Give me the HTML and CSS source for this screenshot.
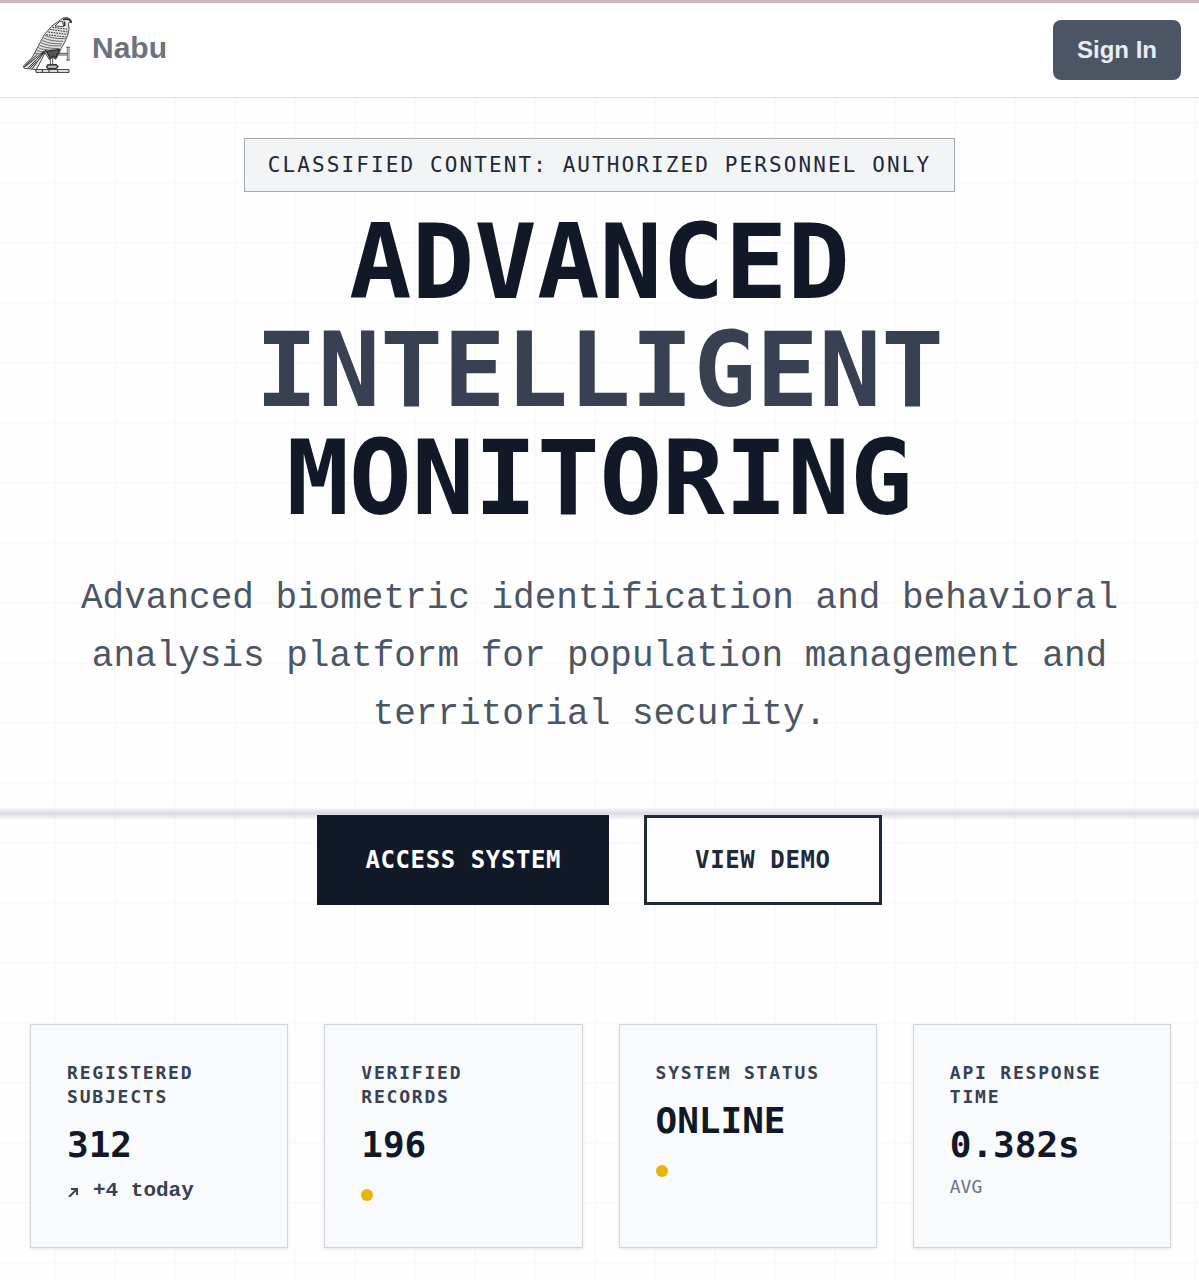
FILE: index.html
```html
<!DOCTYPE html>
<html lang="en">
<head>
<meta charset="utf-8">
<meta name="viewport" content="width=device-width, initial-scale=1">
<title>Nabu</title>
<link rel="stylesheet" href="styles.css">
</head>
<body>
<header class="header">
  <a class="brand" href="#">
    <svg class="brand-logo" viewBox="66 48 154 174" fill="none" stroke="#2b2b2b" stroke-width="2.5" stroke-linejoin="round" aria-hidden="true">
      <path fill="#e4e4e4" d="M180 60Q188 50 202 53Q214 56 214 68Q207 65 204 70Q210 88 202 106Q194 128 182 146L176 160L166 178L158 172L146 178L134 158L120 186L108 209L72 205L69 198L96 172Q116 134 132 104Q150 76 180 60Z"/>
      <path fill="#fff" d="M177 65L164 78L190 80L186 64Z"/>
      <path stroke-width="5" d="M188 58L204 57L213 66M192 65L193 78"/>
      <path stroke-width="3" stroke-dasharray="5 3" d="M156 82L203 88M149 88L204 96M144 96L202 103M138 104L198 111"/>
      <path stroke-width="2" d="M134 106Q150 116 194 116M130 114Q150 124 189 124M126 121Q146 132 185 132M122 128Q142 139 182 138M118 136Q136 145 176 146M114 143Q126 151 160 150M109 151Q120 158 142 154M104 159Q116 163 133 160"/>
      <path stroke-width="3" d="M76 199L132 153M84 203L134 154M96 206L138 148M70 202L112 162M108 184L88 206"/>
      <path fill="#555" stroke-width="4" d="M138 154L178 148L166 174L158 168L149 174Z"/>
      <path d="M149 174L151 195M157 174L157 195M174 160L202 160M174 165L200 165"/>
      <path stroke-width="2" d="M201 140L201 182M206 140L206 182M198 142L208 142M198 180L208 180"/>
      <path fill="#bbb" stroke-width="4" d="M142 195L168 194L173 200L166 206L144 206L139 201Z"/>
      <path stroke-width="3" fill="#fff" d="M107 209H206V217H107ZM126 209V217M146 209V217M172 209V217"/>
    </svg>
    <span class="brand-name">Nabu</span>
  </a>
  <button class="sign-in" type="button">Sign In</button>
</header>
<main class="main">
  <section class="hero">
    <p class="notice">CLASSIFIED CONTENT: AUTHORIZED PERSONNEL ONLY</p>
    <h1 class="title">ADVANCED <span class="title-accent">INTELLIGENT</span> MONITORING</h1>
    <p class="lead">Advanced biometric identification and behavioral analysis platform for population management and territorial security.</p>
    <div class="actions">
      <button class="action action-primary" type="button">ACCESS SYSTEM</button>
      <button class="action action-outline" type="button">VIEW DEMO</button>
    </div>
  </section>
  <section class="stats" aria-label="System statistics">
    <article class="card">
      <h2 class="card-label">REGISTERED SUBJECTS</h2>
      <p class="card-value">312</p>
      <p class="card-change"><svg class="arrow" viewBox="0 0 12 12" fill="none" stroke="currentColor" stroke-width="2" aria-hidden="true"><path d="M2 12L9 5M4 4H10V10"/></svg>+4 today</p>
    </article>
    <article class="card">
      <h2 class="card-label">VERIFIED RECORDS</h2>
      <p class="card-value">196</p>
      <span class="dot"></span>
    </article>
    <article class="card">
      <h2 class="card-label">SYSTEM STATUS</h2>
      <p class="card-value">ONLINE</p>
      <span class="dot"></span>
    </article>
    <article class="card">
      <h2 class="card-label">API RESPONSE TIME</h2>
      <p class="card-value">0.382s</p>
      <p class="card-note">AVG</p>
    </article>
  </section>
</main>
</body>
</html>
```

FILE: styles.css
```css
* {
  box-sizing: border-box;
}

body {
  margin: 0;
  color: #111827;
  background: #fefefe;
  font-family: "DejaVu Sans Mono", monospace;
}

h1, h2, p {
  margin: 0;
}

button {
  cursor: pointer;
}

.header {
  display: flex;
  align-items: center;
  justify-content: space-between;
  padding: 17px 18px 17px 22px;
  border-top: 3px solid #cbb5bd;
  border-bottom: 1px solid #dcdcde;
  background: #fff;
}

.brand {
  display: flex;
  gap: 18px;
  align-self: flex-start;
  align-items: center;
  margin-top: -4px;
  color: #6b7280;
  text-decoration: none;
}

.brand-logo {
  width: 52px;
  height: 58px;
}

.brand-name {
  padding-top: 6px;
  font: 700 30px/36px "Liberation Sans", sans-serif;
}

.sign-in {
  padding: 12px 24px;
  border: 0;
  border-radius: 8px;
  color: #e9edf3;
  background: #4b5565;
  font: 700 24px/36px "Liberation Sans", sans-serif;
}

.main {
  min-height: calc(100vh - 98px);
  background-color: #fefefe;
  background-image:
    linear-gradient(#fafafb 2px, transparent 2px),
    linear-gradient(90deg, #fafafb 2px, transparent 2px);
  background-position: 54px 24px;
  background-size: 60px 60px;
}

.hero {
  display: flex;
  flex-direction: column;
  align-items: center;
  padding-top: 40px;
  text-align: center;
}

.notice {
  padding: 10px 23px;
  border: 1px solid #a3a8b1;
  color: #1f2937;
  background: #f2f4f6;
  font-size: 21px;
  line-height: 32px;
  letter-spacing: 0.1em;
}

.title {
  margin-top: 16px;
  font-size: 104px;
  line-height: 108px;
  font-weight: 700;
}

.title-accent {
  display: block;
  color: #374151;
}

.lead {
  max-width: 1080px;
  margin-top: 38px;
  color: #4b5563;
  font-family: "Liberation Mono", monospace;
  font-size: 36px;
  line-height: 58px;
}

.actions {
  position: relative;
  display: flex;
  justify-content: center;
  gap: 35px;
  align-self: stretch;
  margin-top: 71px;
}

/* Scan line that sweeps behind the buttons */
.actions::before {
  content: "";
  position: absolute;
  top: -8px;
  left: 0;
  right: 0;
  height: 13px;
  background: linear-gradient(transparent, #d9dae0, transparent);
}

.action {
  position: relative;
  font: 700 24px/34px "DejaVu Sans Mono", monospace;
  letter-spacing: 0.025em;
}

.action-primary {
  padding: 28px 48px;
  border: 0;
  color: #fff;
  background: #111827;
}

.action-outline {
  padding: 25px 48px;
  border: 3px solid #1f2937;
  color: #1f2937;
  background: #fefefe;
}

.stats {
  display: grid;
  grid-template-columns: repeat(4, 1fr);
  gap: 36px;
  padding: 119px 28px 32px 30px;
}

.card {
  padding: 36px 36px 40px;
  border: 1px solid #d0d3d8;
  background: #f9fafc;
  box-shadow: 0 1px 3px #0000001a;
}

.card-label {
  color: #374151;
  font-size: 18px;
  line-height: 24px;
  font-weight: 700;
  letter-spacing: 0.1em;
}

.card-value {
  margin-top: 12px;
  font-size: 36px;
  line-height: 48px;
  font-weight: 700;
}

.card-change {
  display: flex;
  align-items: center;
  gap: 14px;
  margin-top: 6px;
  color: #374151;
  font-family: "Liberation Mono", monospace;
  font-size: 21px;
  line-height: 32px;
  font-weight: 700;
}

.arrow {
  width: 12px;
  height: 12px;
}

.card-note {
  margin-top: 6px;
  color: #6b7280;
  font-size: 18px;
  line-height: 24px;
}

.dot {
  display: block;
  width: 12px;
  height: 12px;
  margin-top: 20px;
  border-radius: 50%;
  background: #eab308;
}

@media (max-width: 900px) {
  .title {
    font-size: 56px;
    line-height: 60px;
  }

  .lead {
    padding: 0 16px;
    font-size: 24px;
    line-height: 36px;
  }

  .stats {
    grid-template-columns: repeat(2, 1fr);
  }
}
```
